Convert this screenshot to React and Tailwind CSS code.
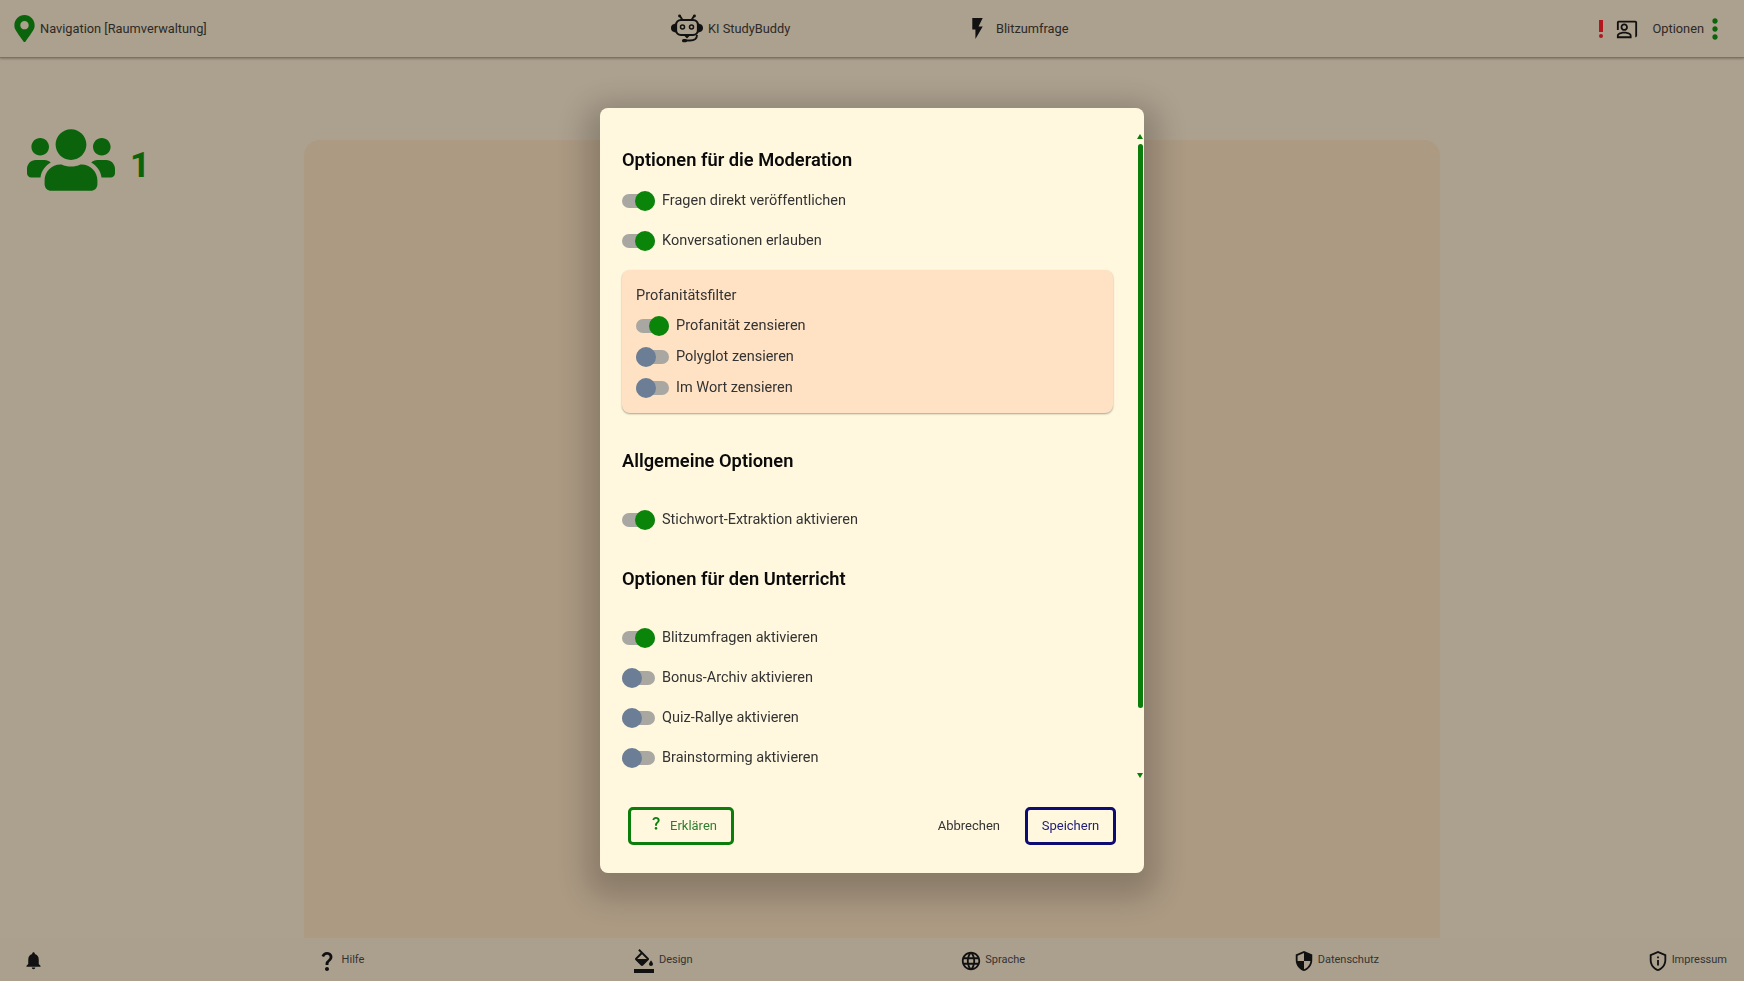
import { FaMapMarkerAlt, FaUsers } from "react-icons/fa";
import {
  MdFlashOn,
  MdPriorityHigh,
  MdOutlineCoPresent,
  MdMoreVert,
  MdNotifications,
  MdQuestionMark,
  MdFormatColorFill,
  MdLanguage,
  MdSecurity,
  MdOutlinePrivacyTip,
} from "react-icons/md";

function BotIcon() {
  return (
    <svg width="34" height="30" viewBox="0 0 34 30" fill="none" className="shrink-0">
      <path d="M10 2l2.500 4M24 2l-2.500 4" stroke="#111" strokeWidth="1.800" strokeLinecap="round" />
      <circle cx="9.500" cy="2" r="1.400" fill="#111" />
      <circle cx="24.500" cy="2" r="1.400" fill="#111" />
      <rect x="6" y="6" width="22" height="15" rx="5" stroke="#111" strokeWidth="2.200" />
      <path d="M6 9.500C2 10 1 12 1 14s1 4 5 4.500zM28 9.500c4 .5 5 2.500 5 4.500s-1 4-5 4.500z" fill="#111" />
      <circle cx="12.500" cy="13" r="2" stroke="#111" strokeWidth="1.500" />
      <circle cx="21.500" cy="13" r="2" stroke="#111" strokeWidth="1.500" />
      <path d="M14 21.500h6l-3 3z" fill="#111" />
      <path d="M27 21c0 4-3 5.500-7 5.500h-5" stroke="#111" strokeWidth="1.800" />
      <rect x="12" y="25" width="5" height="3.200" rx="1.500" fill="#111" />
    </svg>
  );
}

function Toggle({ on, label }) {
  return (
    <div className="flex items-center">
      <div className="relative w-[33px] h-[14px] rounded-full bg-[#a8a7a2] shrink-0">
        <div className={`absolute top-[-3px] w-5 h-5 rounded-full ${on ? "right-0 bg-[#0a850a]" : "left-0 bg-[#6b7e96]"}`} />
      </div>
      <span className="ml-[7px] pt-px text-[14.500px] leading-5 text-[#333]">{label}</span>
    </div>
  );
}

function Heading({ children, className }) {
  return <h2 className={`text-[18.300px] leading-6 font-semibold text-[#0a0a0a] ${className}`}>{children}</h2>;
}

function FooterItem({ icon, label, className }) {
  return (
    <div className={`flex items-center gap-[3px] ${className}`}>
      {icon}
      {label && <span className="text-[11px] text-[#333]">{label}</span>}
    </div>
  );
}

export default function App() {
  return (
    <div className="h-screen overflow-hidden flex flex-col bg-[#aca08e] font-['Roboto',sans-serif]">
      <header className="h-[58px] shrink-0 flex items-center border-b border-[#7b7264] shadow-[0_1px_2px_rgba(0,0,0,0.25)] bg-[#aca08e] text-[12.800px] text-[#2c2a26]">
        <FaMapMarkerAlt size={27} className="ml-[11px] mr-[2px] text-[#0b640b]" />
        <span className="w-[630px]">Navigation [Raumverwaltung]</span>
        <BotIcon />
        <span className="ml-[4px] w-[257px]">KI StudyBuddy</span>
        <MdFlashOn size={25} className="text-[#111]" />
        <span className="ml-[6px] flex-1">Blitzumfrage</span>
        <MdPriorityHigh size={24} className="text-[#b3161d]" />
        <MdOutlineCoPresent size={22} className="ml-[3px] text-[#111]" />
        <span className="ml-[14px]">Optionen</span>
        <MdMoreVert size={32} className="ml-[-5px] mr-[13px] text-[#0b640b]" />
      </header>

      <main className="flex-1 min-h-0 flex pt-[82px]">
        <div className="w-[304px] shrink-0 flex items-start pl-[27px]">
          <FaUsers size={88} className="text-[#0b640b] mt-[-24px]" />
          <span className="ml-[15px] mt-[1px] text-[35px] font-bold leading-[50px] text-[#0b640b]">1</span>
        </div>
        <div className="w-[1136px] h-full rounded-t-2xl bg-[#ac9a83]" />
      </main>

      <footer className="h-[43px] shrink-0 flex items-center justify-between pl-[23px] pr-[17px] pt-[2px] bg-[#aba08e]">
        <FooterItem icon={<MdNotifications size={21} className="text-[#111]" />} />
        <FooterItem className="ml-[3px]" icon={<MdQuestionMark size={24} className="text-[#111]" />} label="Hilfe" />
        <FooterItem icon={<MdFormatColorFill size={24} className="text-[#111]" />} label="Design" />
        <FooterItem icon={<MdLanguage size={22} className="text-[#111]" />} label="Sprache" />
        <FooterItem icon={<MdSecurity size={22} className="text-[#111]" />} label="Datenschutz" />
        <FooterItem icon={<MdOutlinePrivacyTip size={22} className="text-[#111]" />} label="Impressum" />
      </footer>

      {/* dialog */}
      <div className="fixed inset-0 flex justify-center items-start pt-[108px]">
        <div className="relative w-[544px] h-[765px] rounded-[8px] bg-[#fff8df] shadow-[0_11px_30px_14px_rgba(0,0,0,0.2)] flex flex-col">
          <div className="h-[668px] overflow-hidden px-[22px] pt-[40px]">
            <Heading>Optionen für die Moderation</Heading>
            <div className="mt-[18px] flex flex-col gap-[19px]">
              <Toggle on label="Fragen direkt veröffentlichen" />
              <Toggle on label="Konversationen erlauben" />
            </div>
            <div className="mt-[19px] w-[491px] h-[143px] rounded-lg bg-[#ffe2c3] shadow-[0_1px_2px_rgba(0,0,0,0.35)] px-[14px] pt-[16px]">
              <div className="text-[14.500px] leading-5 text-[#333]">Profanitätsfilter</div>
              <div className="mt-[9px] flex flex-col gap-[10px]">
                <Toggle on label="Profanität zensieren" />
                <Toggle label="Polyglot zensieren" />
                <Toggle label="Im Wort zensieren" />
              </div>
            </div>
            <Heading className="mt-[36px]">Allgemeine Optionen</Heading>
            <div className="mt-[36px]">
              <Toggle on label="Stichwort-Extraktion aktivieren" />
            </div>
            <Heading className="mt-[37px]">Optionen für den Unterricht</Heading>
            <div className="mt-[36px] flex flex-col gap-[19px]">
              <Toggle on label="Blitzumfragen aktivieren" />
              <Toggle label="Bonus-Archiv aktivieren" />
              <Toggle label="Quiz-Rallye aktivieren" />
              <Toggle label="Brainstorming aktivieren" />
            </div>
          </div>

          <div className="flex items-center pl-[28px] pr-[28px] mt-[31px]">
            <button className="w-[106px] h-[38px] pl-[3px] rounded-[5px] border-[3px] border-[#0b7d0b] flex items-center justify-center text-[13px] text-[#2f7d2f]">
              <MdQuestionMark size={16} className="mr-[6px] mt-[-6px] text-[#0b7d0b]" />
              Erklären
            </button>
            <button className="ml-auto text-[13px] text-[#333]">Abbrechen</button>
            <button className="ml-[25px] w-[91px] h-[38px] rounded-[5px] border-[3px] border-[#0c0c73] text-[13px] text-[#20207a]">
              Speichern
            </button>
          </div>

          {/* scrollbar */}
          <div className="absolute right-[1px] top-[26px] w-0 h-0 border-x-[3px] border-x-transparent border-b-[5px] border-b-[#0b7d0b]" />
          <div className="absolute right-[1px] top-[36px] w-[5px] h-[564px] rounded-full bg-[#0b7d0b]" />
          <div className="absolute right-[1px] top-[665px] w-0 h-0 border-x-[3px] border-x-transparent border-t-[5px] border-t-[#0b7d0b]" />
        </div>
      </div>
    </div>
  );
}
